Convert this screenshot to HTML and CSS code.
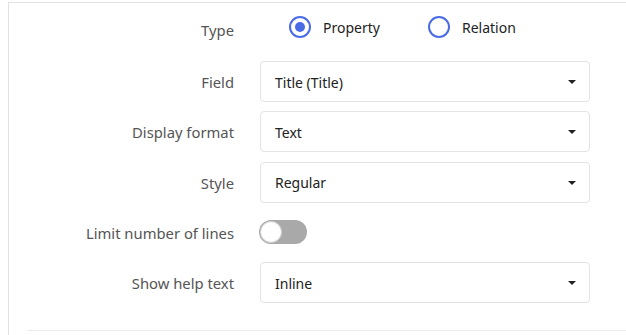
FILE: index.html
```html
<!DOCTYPE html>
<html>
<head>
<meta charset="utf-8">
<link rel="stylesheet" href="styles.css">
</head>
<body>
<div class="panel">
  <div class="form">
    <div class="label type-label">Type</div>
    <div class="radios">
      <label class="radio checked"><span class="dot"></span><span>Property</span></label>
      <label class="radio"><span class="dot"></span><span>Relation</span></label>
    </div>

    <div class="label">Field</div>
    <div class="select"><span>Title (Title)</span><span class="caret"></span></div>

    <div class="label">Display format</div>
    <div class="select"><span>Text</span><span class="caret"></span></div>

    <div class="label">Style</div>
    <div class="select"><span>Regular</span><span class="caret"></span></div>

    <div class="label">Limit number of lines</div>
    <div class="toggle-cell"><span class="toggle"><span class="knob"></span></span></div>

    <div class="label">Show help text</div>
    <div class="select"><span>Inline</span><span class="caret"></span></div>
  </div>
  <div class="footer"></div>
</div>
</body>
</html>
```
FILE: styles.css
```css
html, body {
  margin: 0;
  padding: 0;
  background: #fff;
}
body {
  padding: 2px 0 0 8px;
  font-family: "Noto Sans", "Open Sans", sans-serif;
  font-size: 14px;
  overflow: hidden;
  height: 335px;
  box-sizing: border-box;
}
.panel {
  border-top: 1px solid #e2e2e2;
  border-left: 1px solid #e2e2e2;
  height: 333px;
  box-sizing: border-box;
}
.form {
  display: grid;
  grid-template-columns: 207px 330px;
  grid-template-rows: 48.75px repeat(5, 41px);
  column-gap: 26px;
  row-gap: 9.25px;
  padding-left: 18px;
  padding-bottom: 27px;
}
.label {
  display: flex;
  align-items: center;
  justify-content: flex-end;
  color: #555;
  font-size: 14.8px;
  padding-top: 1px;
}
.type-label {
  padding-top: 5px;
}
.radios {
  display: flex;
  align-items: center;
  padding-left: 29px;
  gap: 48px;
  color: #222;
}
.radio {
  display: flex;
  align-items: center;
  gap: 12px;
}
.dot {
  width: 22px;
  height: 22px;
  box-sizing: border-box;
  border: 2px solid #4a6be6;
  border-radius: 50%;
  display: flex;
  align-items: center;
  justify-content: center;
}
.radio.checked .dot::after {
  content: "";
  width: 10px;
  height: 10px;
  border-radius: 50%;
  background: #4a6be6;
}
.select {
  border: 1px solid #e3e3e3;
  border-radius: 4px;
  display: flex;
  align-items: center;
  justify-content: space-between;
  padding: 1px 13px 0 14px;
  color: #222;
}
.caret {
  width: 0;
  height: 0;
  border-left: 4px solid transparent;
  border-right: 4px solid transparent;
  border-top: 4px solid #222;
}
.toggle-cell {
  display: flex;
  align-items: center;
  margin-left: -1px;
}
.toggle {
  width: 48px;
  height: 24px;
  border-radius: 12px;
  background: #a9a9a9;
  display: flex;
  align-items: center;
  padding: 2px;
  box-sizing: border-box;
}
.knob {
  width: 20px;
  height: 20px;
  border-radius: 50%;
  background: #fff;
  box-shadow: 0 0 0 1px #cfcfcf;
}
.footer {
  margin-left: 18px;
  border-top: 1px solid #ececec;
}
```
